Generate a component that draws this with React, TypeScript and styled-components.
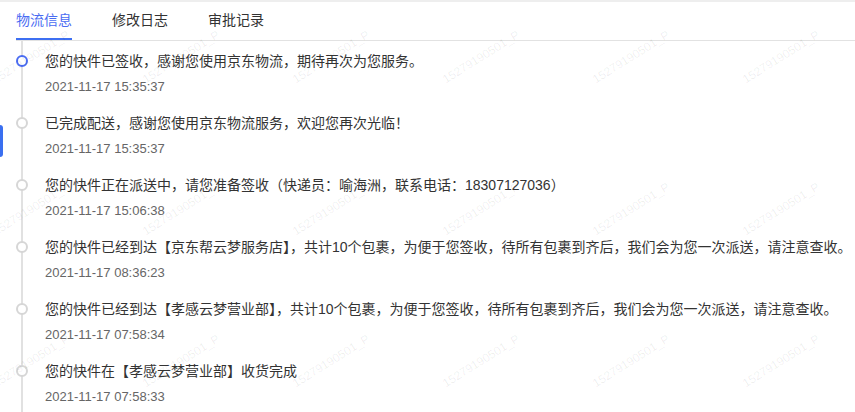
import styled, { createGlobalStyle } from "styled-components"

const GlobalStyle = createGlobalStyle`
  html, body {
    margin: 0;
    padding: 0;
    background: #fff;
    overflow: hidden;
  }
  body {
    font-family: "Liberation Sans", "Noto Sans CJK SC", sans-serif;
  }
`

const StyledPage = styled.div`
  position: relative;
  height: 412px;
  overflow: hidden;
  border-top: 2px solid #eeeeee;
  box-sizing: border-box;
  padding-left: 16px;
`

const StyledTabs = styled.div`
  display: flex;
  gap: 40px;
  border-bottom: 1px solid #e2e2e2;
  height: 38px;
`

const StyledTab = styled.div<{ $active?: boolean }>`
  display: flex;
  align-items: center;
  padding-bottom: 2px;
  box-sizing: border-box;
  height: 38px;
  font-size: 14px;
  color: ${p => p.$active ? "#4a6cf2" : "#333"};
  border-bottom: 2px solid ${p => p.$active ? "#3d6ff2" : "transparent"};
  margin-bottom: -1px;
  cursor: pointer;
`

const StyledTimeline = styled.div`
  padding-top: 9px;
  background: linear-gradient(#e1e1e1, #e1e1e1) no-repeat 5px 0 / 2px 100%;
`

const StyledItem = styled.div`
  display: grid;
  grid-template-columns: 12px 1fr;
  column-gap: 17px;
  padding-bottom: 14px;
`

const StyledDot = styled.div<{ $active?: boolean }>`
  width: 12px;
  height: 12px;
  box-sizing: border-box;
  margin-top: 5px;
  border-radius: 50%;
  background: #fff;
  border: 2px solid ${p => p.$active ? "#4a6cf2" : "#d6d6d6"};
`

const StyledTitle = styled.div`
  font-size: 14px;
  line-height: 22px;
  color: #333;
  white-space: nowrap;
`

const StyledDate = styled.div`
  margin-top: 4px;
  font-size: 13px;
  line-height: 22px;
  color: #666;
`

const StyledWatermark = styled.div`
  position: absolute;
  top: -21px;
  left: -44px;
  display: grid;
  grid-template-columns: repeat(7, 150px);
  grid-auto-rows: 152px;
  pointer-events: none;
  span {
    display: flex;
    align-items: center;
    justify-content: center;
    font-size: 12px;
    color: rgba(0, 0, 0, 0.07);
    transform: rotate(-32deg);
  }
`

const StyledSideTab = styled.div`
  position: absolute;
  left: 0;
  top: 123px;
  width: 3px;
  height: 32px;
  background: #3a6ff0;
  border-radius: 0 3px 3px 0;
`

const tabs = ["物流信息", "修改日志", "审批记录"]

const events = [
  { text: "您的快件已签收，感谢您使用京东物流，期待再次为您服务。", time: "2021-11-17 15:35:37" },
  { text: "已完成配送，感谢您使用京东物流服务，欢迎您再次光临！", time: "2021-11-17 15:35:37" },
  { text: "您的快件正在派送中，请您准备签收（快递员：喻海洲，联系电话：18307127036）", time: "2021-11-17 15:06:38" },
  { text: "您的快件已经到达【京东帮云梦服务店】，共计10个包裹，为便于您签收，待所有包裹到齐后，我们会为您一次派送，请注意查收。", time: "2021-11-17 08:36:23" },
  { text: "您的快件已经到达【孝感云梦营业部】，共计10个包裹，为便于您签收，待所有包裹到齐后，我们会为您一次派送，请注意查收。", time: "2021-11-17 07:58:34" },
  { text: "您的快件在【孝感云梦营业部】收货完成", time: "2021-11-17 07:58:33" },
]

export default function App(){
  return <StyledPage>
    <GlobalStyle />

    <StyledTabs>
      {tabs.map((t, i) => <StyledTab key={t} $active={i === 0}>{t}</StyledTab>)}
    </StyledTabs>

    <StyledTimeline>
      {events.map((e, i) => (
        <StyledItem key={i}>
          <StyledDot $active={i === 0} />
          <div>
            <StyledTitle>{e.text}</StyledTitle>
            <StyledDate>{e.time}</StyledDate>
          </div>
        </StyledItem>
      ))}
    </StyledTimeline>

    <StyledSideTab />

    <StyledWatermark>
      {Array.from({ length: 28 }).map((_, i) => <span key={i}>15279190501_P</span>)}
    </StyledWatermark>
  </StyledPage>
}
